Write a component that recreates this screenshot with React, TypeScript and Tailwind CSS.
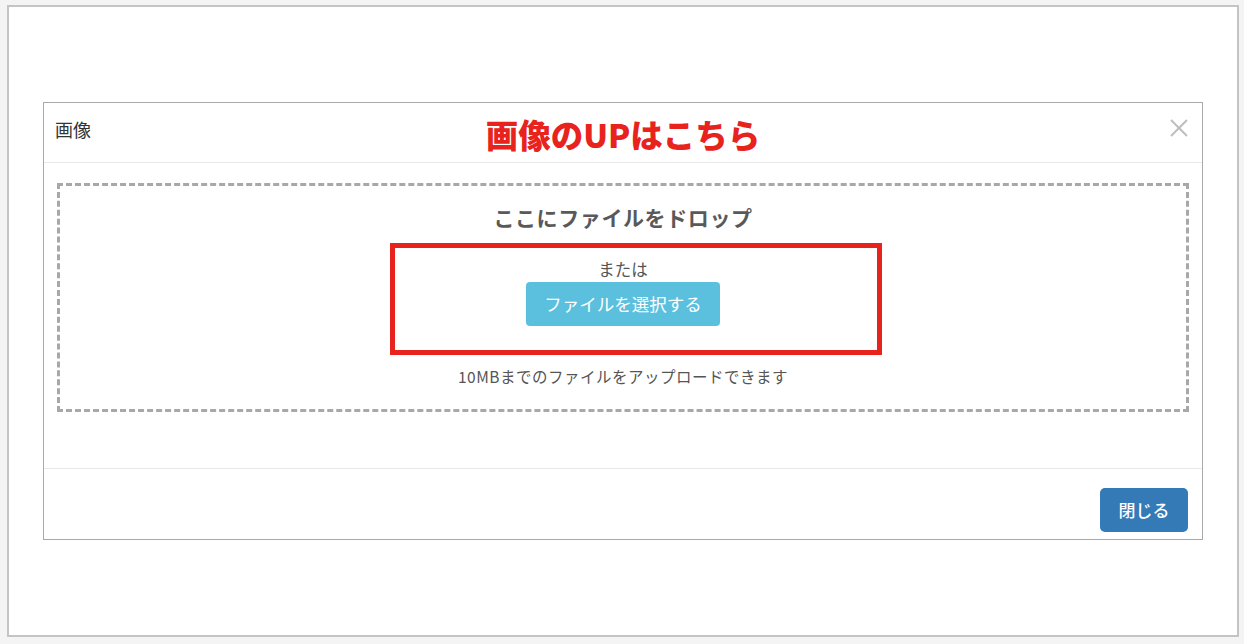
import React from 'react'

const font = { fontFamily: '"Noto Sans CJK JP", "Noto Sans", sans-serif' }

const CloseIcon = () => (
    <svg width="20" height="20" viewBox="0 0 20 20" fill="none" stroke="#bdbdbd" strokeWidth="2">
        <line x1="2" y1="2" x2="18" y2="18" />
        <line x1="18" y1="2" x2="2" y2="18" />
    </svg>
)

const App = () => {
    return (
        <main className="w-[1244px] h-[644px] bg-[#f4f4f4] pt-[5px] pl-[7px] pr-[5px] pb-[7px]" style={font}>
            <div className="h-full border-2 border-[#c4c4c4] bg-white pt-[95px] px-[34px]">
                <section className="border border-[#a9a9a9] bg-white h-[438px] flex flex-col">
                    <header className="relative h-[60px] border-b border-[#e8e8e8] flex items-start justify-between pl-[11px] pr-[13px] pt-[13px]">
                        <h1 className="text-[18px] text-[#333]">画像</h1>
                        <div className="pt-[2px]">
                            <CloseIcon />
                        </div>
                        <span className="absolute left-1/2 -translate-x-1/2 top-[15px] text-[32.5px] font-black text-[#e8231e] whitespace-nowrap leading-none">
                            画像のUPはこちら
                        </span>
                    </header>

                    <div className="h-[305px] pt-[20px] px-[13px]">
                        <div className="relative h-[229px] border-[3px] border-dashed border-[#a8a8a8] flex flex-col items-center pt-[17px]">
                            <p className="text-[21px] font-bold text-[#595959] leading-[28px] tracking-[0.6px]">
                                ここにファイルをドロップ
                            </p>
                            <p className="mt-[27px] text-[16.5px] text-[#555] leading-[22px]">または</p>
                            <button className="mt-[2px] h-[44px] px-[18px] rounded-[4px] bg-[#5bc0de] text-white text-[17.5px] leading-none">
                                ファイルを選択する
                            </button>
                            <p className="mt-[40px] text-[15.5px] text-[#555] leading-[20px] tracking-[0.5px]">
                                10MBまでのファイルをアップロードできます
                            </p>
                            <div className="absolute left-[330px] top-[57px] w-[492px] h-[112px] border-[5px] border-[#e8231e]" />
                        </div>
                    </div>

                    <footer className="flex-1 border-t border-[#e8e8e8] flex justify-end items-start pt-[19px] pr-[14px]">
                        <button className="h-[44px] w-[88px] rounded-[5px] bg-[#337ab7] text-white text-[17px] font-medium">
                            閉じる
                        </button>
                    </footer>
                </section>
            </div>
        </main>
    )
}

export default App
